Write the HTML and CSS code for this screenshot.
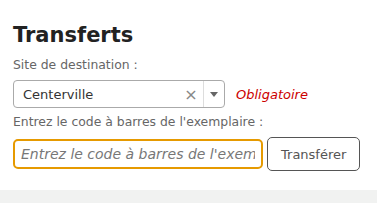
FILE: index.html
```html
<!DOCTYPE html>
<html lang="fr">
<head>
<meta charset="UTF-8">
<title>Transferts</title>
<link rel="stylesheet" href="styles.css">
</head>
<body>

<div class="main">
    <h1>Transferts</h1>

    <label class="field-label">Site de destination :</label>
    <div class="row">
        <div class="select">
            <span class="select-value">Centerville</span>
            <span class="select-clear">×</span>
            <span class="select-arrow"><span class="caret"></span></span>
        </div>
        <span class="required">Obligatoire</span>
    </div>

    <label class="field-label">Entrez le code à barres de l'exemplaire :</label>
    <div class="row">
        <input type="text" class="barcode" placeholder="Entrez le code à barres de l'exemplaire" autofocus>
        <button class="btn">Transférer</button>
    </div>
</div>

<div class="footer"></div>

</body>
</html>
```

FILE: styles.css
```css
body {
    margin: 0;
    padding: 0;
    background: #fff;
    font-family: "DejaVu Sans", sans-serif;
}
.main {
    padding: 22px 13px 20px;
    height: 148px;
}
h1 {
    margin: 0 0 8px;
    font-size: 21px;
    line-height: 26px;
    color: #222;
}
.field-label {
    display: block;
    font-size: 12.4px;
    line-height: 18px;
    color: #666;
    margin-bottom: 6px;
}
.row {
    display: flex;
    align-items: center;
    margin-bottom: 5px;
}
.select {
    display: flex;
    align-items: center;
    width: 210px;
    height: 26px;
    border: 1px solid #aaa;
    border-radius: 4px;
    box-sizing: content-box;
    font-size: 13px;
    color: #333;
}
.select-value {
    flex: 1;
    padding-left: 9px;
}
.select-clear {
    width: 20px;
    text-align: center;
    color: #888;
    font-size: 16px;
    margin-right: 2px;
}
.select-arrow {
    display: flex;
    align-items: center;
    justify-content: center;
    width: 20px;
    height: 26px;
    border-left: 1px solid #ddd;
}
.caret {
    border-left: 4px solid transparent;
    border-right: 4px solid transparent;
    border-top: 5px solid #666;
}
.required {
    margin-left: 11px;
    font-size: 13px;
    font-style: italic;
    color: #c00;
}
.barcode {
    width: 250px;
    height: 30px;
    box-sizing: border-box;
    border: 2px solid #e69a00;
    border-radius: 5px;
    padding: 0 6px;
    font-family: "DejaVu Sans", sans-serif;
    font-size: 14px;
    color: #333;
    outline: none;
    text-overflow: ellipsis;
}
.barcode::placeholder {
    font-style: italic;
    color: #777;
}
.btn {
    margin-left: 4px;
    height: 34px;
    padding: 0 13px;
    background: #fff;
    border: 1px solid #555;
    border-radius: 5px;
    font-family: "DejaVu Sans", sans-serif;
    font-size: 13px;
    color: #555;
}
.footer {
    height: 20px;
    background: #f1f2f1;
}
```
